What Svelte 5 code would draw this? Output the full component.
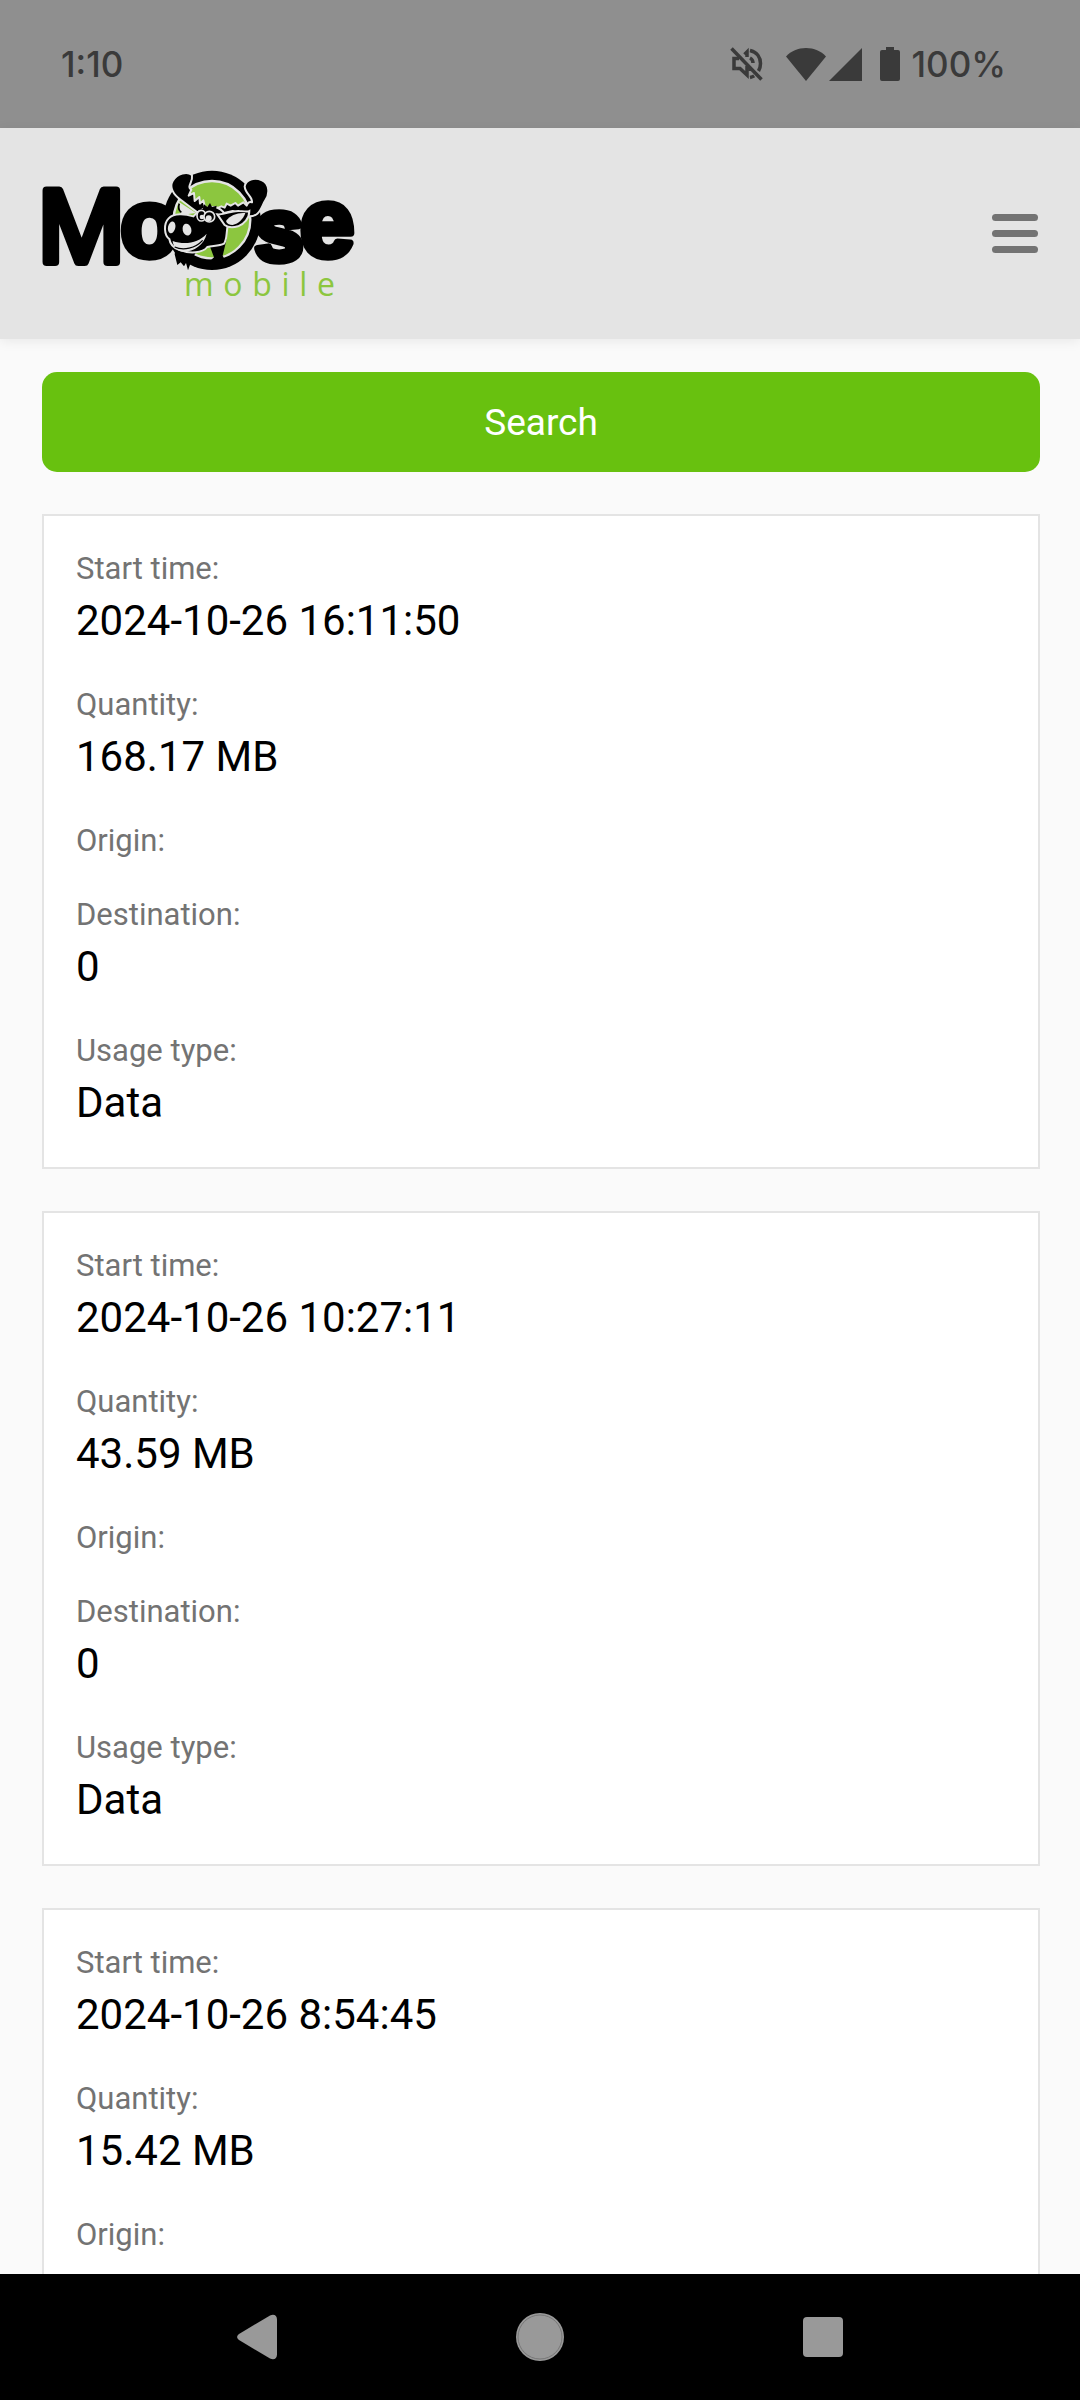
<script>
  const records = [
    { start: '2024-10-26 16:11:50', quantity: '168.17 MB', origin: '', destination: '0', type: 'Data' },
    { start: '2024-10-26 10:27:11', quantity: '43.59 MB', origin: '', destination: '0', type: 'Data' },
    { start: '2024-10-26 8:54:45', quantity: '15.42 MB', origin: '', destination: '0', type: 'Data' }
  ];

  const fields = [
    { key: 'start', label: 'Start time:' },
    { key: 'quantity', label: 'Quantity:' },
    { key: 'origin', label: 'Origin:' },
    { key: 'destination', label: 'Destination:' },
    { key: 'type', label: 'Usage type:' }
  ];
</script>

<div class="screen">
  <!-- Status bar -->
  <div class="status-bar">
    <span class="clock">1:10</span>
    <div class="status-icons">
      <svg class="mute" width="34" height="36" viewBox="0 0 34 36" fill="none" stroke="currentColor" stroke-width="3.500">
        <path d="M9 12.500H4v10h6l7 6.500v-9" />
        <path d="M14.500 8.500L17 6v5" />
        <path d="M20 12c2 1 3 2.500 3 5M20 4.500c7 1.500 10.500 7 10.500 13 0 3-.8 5.500-2 7.500M20 31.500c1.500-.3 3-.8 4.200-1.600M20 21v4" />
        <path d="M1.500 2.500l30 31" />
      </svg>
      <svg class="wifi" width="40" height="34" viewBox="0 0 40 34" fill="currentColor">
        <path d="M20 34L0 9.500C5 4 12 1 20 1s15 3 20 8.500z" />
      </svg>
      <svg class="signal" width="33" height="34" viewBox="0 0 33 34" fill="currentColor">
        <path d="M33 1v33H0z" />
      </svg>
      <svg class="battery" width="20" height="34" viewBox="0 0 20 34" fill="currentColor">
        <path d="M6 0h8v3h4a2 2 0 0 1 2 2v27a2 2 0 0 1-2 2H2a2 2 0 0 1-2-2V5a2 2 0 0 1 2-2h4z" />
      </svg>
      <span class="percent">100%</span>
    </div>
  </div>

  <header class="header">
    <a class="logo" href="#home" aria-label="Moose mobile">
      <svg width="317" height="130" viewBox="36 40 951 390">
        <g class="word">
          <text x="24" y="320" font-size="312" stroke-width="24">M</text>
          <g font-weight="700" stroke-width="22">
            <text x="272" y="300" font-size="282">o</text>
            <text x="674" y="312" font-size="262">s</text>
            <text x="811" y="300" font-size="290">e</text>
          </g>
        </g>

        <!-- Ring -->
        <ellipse cx="546" cy="194" rx="146" ry="149" />
        <ellipse cx="546" cy="192" rx="115" ry="116" fill="#8cc63f" stroke="#e4e4e4" stroke-width="7" />

        <!-- Neck and beard -->
        <path d="M536 262L590 250L578 300L592 325H530L552 305z" />
        <path d="M418 262c14 10 18 22 16 34l8 32 10-8 10 12 6-10 6 22 8-22 8 6c-2-22 2-34 14-42l10-14z" />

        <!-- Antlers -->
        <g stroke="#e4e4e4" stroke-width="6" stroke-linejoin="round">
          <path d="M486 58c-14-12-44-6-58 18-10 18 0 40 26 58 18 14 34 26 48 36l24-10-6-26-10 10-2-20-14 12-2-24-16 8 8-18c-16-10 6-20 2-44z" />
          <path d="M644 92c4-20 28-28 52-18 22 10 24 40 10 60-8 12-12 30-24 40-12 10-20 8-30 8l-44-16-42 10-6-18 14-6 10 4 6-12 12 6 14-8 8 8 16-10 10 10c4-12 10-12 16-10 2-18-20-24-22-48z" />
        </g>
        <path d="M446 138l52 34-46 6z" fill="#e4e4e4" />
        <path d="M448 144c-4 10-2 20 6 26" fill="none" stroke="#000" stroke-width="5" />

        <!-- Head -->
        <path
          d="M500 172c14-12 30-20 52-18 16 2 26 10 32 22l10 30c-6 24-2 44-12 58-14 8-34 6-50 10-14 18-52 22-86 8-20-8-26-18-28-32-16-12-18-46-2-62 16-16 48-14 74-6z"
          stroke="#e4e4e4"
          stroke-width="6"
        />
        <path d="M506 166l4-10 8 4 4-14 10 8 8-12 6 12 14-4-2 12 10 2-8 14-50 10z" />

        <!-- Ear -->
        <path d="M562 176c26 2 40-12 66-10 16 0 24 4 30 0 0 22-16 40-34 46-14 4-30 4-40-4z" stroke="#e4e4e4" stroke-width="6" />
        <path d="M588 196c12-18 36-26 58-24-6 18-20 32-38 36-10 0-18-4-20-12z" fill="#e4e4e4" />

        <!-- Face -->
        <ellipse cx="514" cy="180" rx="13" ry="16" stroke="#e4e4e4" stroke-width="5" />
        <circle cx="516" cy="184" r="7" fill="#e4e4e4" />
        <circle cx="538" cy="183" r="16" stroke="#e4e4e4" stroke-width="5" />
        <circle cx="536" cy="188" r="9" fill="#e4e4e4" />
        <ellipse cx="425" cy="215" rx="11" ry="18" fill="#e4e4e4" transform="rotate(12 425 215)" />
        <ellipse cx="471" cy="222" rx="13" ry="18" fill="#e4e4e4" transform="rotate(-14 471 222)" />
        <path d="M428 256c40 14 78 4 102-22-8 34-40 56-74 54-16-2-26-14-28-32z" fill="#e4e4e4" />
        <path d="M434 274c26 12 62 4 84-20" fill="none" stroke="#000" stroke-width="4" />

        <text class="tagline" x="462" y="421" font-size="96">mobile</text>
      </svg>
    </a>

    <button class="menu-btn" aria-label="Menu">
      <span class="bar"></span>
      <span class="bar"></span>
      <span class="bar"></span>
    </button>
  </header>

  <main class="content">
    <button class="search-btn">Search</button>

    {#each records as record}
      <dl class="card">
        {#each fields as field}
          <div class="field">
            <dt>{field.label}</dt>
            {#if record[field.key]}
              <dd>{record[field.key]}</dd>
            {/if}
          </div>
        {/each}
      </dl>
    {/each}
  </main>

  <!-- System navigation -->
  <nav class="nav-bar">
    <button aria-label="Back">
      <svg width="40" height="46" viewBox="0 0 40 46" fill="currentColor">
        <path d="M2 20L33 1.500c4-2 7 0 7 4v35c0 4-3 6-7 4L2 26c-2.500-2-2.500-4 0-6z" />
      </svg>
    </button>
    <button aria-label="Home">
      <svg width="48" height="48" viewBox="0 0 48 48" fill="currentColor">
        <circle cx="24" cy="24" r="24" />
        <circle cx="24" cy="24" r="22" fill="none" stroke="#777" />
      </svg>
    </button>
    <button aria-label="Recent apps">
      <svg width="40" height="40" viewBox="0 0 40 40" fill="currentColor">
        <rect width="40" height="40" rx="4" />
      </svg>
    </button>
  </nav>
</div>

<style>
  :global(body) {
    background: #fafafa;
  }

  .screen {
    display: flex;
    flex-direction: column;
    height: 100vh;
    font-family: Roboto, sans-serif;
    background: #fafafa;
  }

  button {
    padding: 0;
    border: none;
    background: none;
    font-family: inherit;
    cursor: pointer;
  }

  .status-bar {
    display: flex;
    align-items: center;
    justify-content: space-between;
    flex-shrink: 0;
    height: 128px;
    padding: 0 74px 0 61px;
    box-sizing: border-box;
    background: #8f8f8f;
    color: #3a3a3a;
    font-family: Inter, sans-serif;
    font-size: 35px;
    font-weight: 500;
  }

  .status-icons {
    display: flex;
    align-items: center;
  }

  .mute {
    margin-right: 22px;
  }

  .wifi {
    margin-right: 3px;
  }

  .signal {
    margin-right: 18px;
  }

  .battery {
    margin-right: 12px;
  }

  .header {
    display: flex;
    align-items: center;
    justify-content: space-between;
    flex-shrink: 0;
    height: 211px;
    padding: 0 42px;
    box-sizing: border-box;
    background: #e4e4e4;
    box-shadow: 0 2px 12px rgba(0, 0, 0, 0.08);
  }

  .logo,
  .logo svg {
    display: block;
    overflow: visible;
  }

  .word {
    font-family: 'Liberation Sans', sans-serif;
    fill: #000;
    stroke: #000;
    stroke-linejoin: round;
  }

  .tagline {
    font-family: 'Open Sans', sans-serif;
    letter-spacing: 29px;
    fill: #8cc63f;
  }

  .menu-btn {
    display: flex;
    flex-direction: column;
    gap: 9px;
  }

  .bar {
    width: 46px;
    height: 7px;
    border-radius: 4px;
    background: #737373;
  }

  .content {
    display: flex;
    flex: 1;
    flex-direction: column;
    gap: 42px;
    min-height: 0;
    padding: 33px 40px 0 42px;
    overflow: hidden;
  }

  .search-btn {
    flex-shrink: 0;
    height: 100px;
    border-radius: 15px;
    background: #68c10f;
    color: #fff;
    font-size: 37px;
  }

  .card {
    display: flex;
    flex-direction: column;
    flex-shrink: 0;
    gap: 32px;
    margin: 0;
    padding: 32px 32px 33px;
    border: 2px solid #e4e4e4;
    background: #fff;
  }

  dt {
    color: #737373;
    font-size: 31px;
    line-height: 42px;
  }

  dd {
    margin: 0;
    color: #000;
    font-size: 42px;
    line-height: 62px;
  }

  .nav-bar {
    display: grid;
    grid-template-columns: repeat(3, 1fr);
    flex-shrink: 0;
    height: 126px;
    padding: 0 116px;
    background: #000;
  }

  .nav-bar button {
    display: flex;
    align-items: center;
    justify-content: center;
    color: #999;
  }
</style>
